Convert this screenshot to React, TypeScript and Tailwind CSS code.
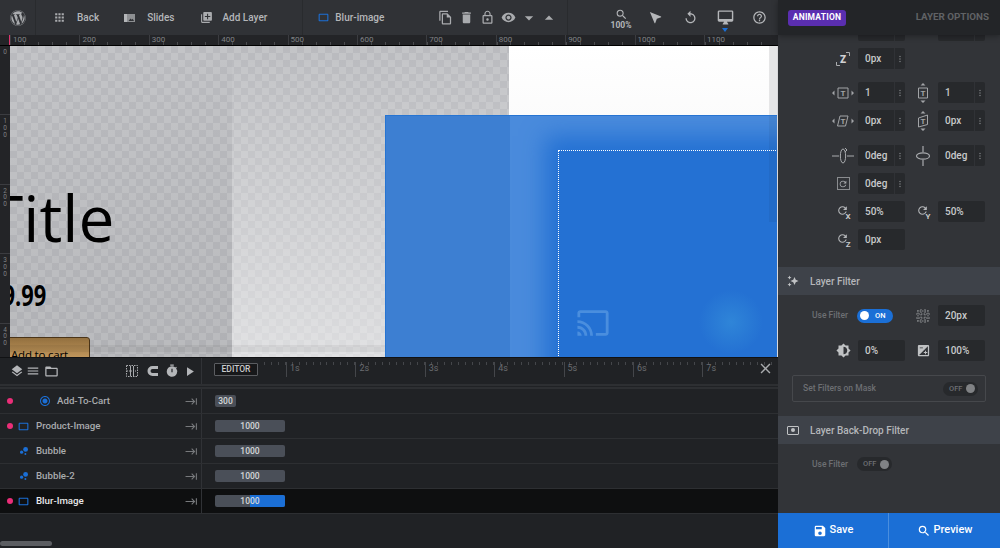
import type { ReactNode } from "react";
import { FaWordpress } from "react-icons/fa";
import {
  MdApps,
  MdArrowDropDown,
  MdArrowDropUp,
  MdAutoAwesome,
  MdBrightness6,
  MdBubbleChart,
  MdCast,
  MdClose,
  MdCropLandscape,
  MdDelete,
  MdExposure,
  MdFolderOpen,
  MdHelpOutline,
  MdKeyboardTab,
  MdLayers,
  MdLibraryAdd,
  MdLockOutline,
  MdMenu,
  MdMoreVert,
  MdNearMe,
  MdOutlineDesktopMac,
  MdOutlineFileCopy,
  MdPlayArrow,
  MdRadioButtonChecked,
  MdRefresh,
  MdReplay,
  MdSave,
  MdSearch,
  MdTimer,
  MdVisibility,
} from "react-icons/md";

const hTicks = ["100", "200", "300", "400", "500", "600", "700", "800", "900", "1000", "1100"];
const vTicks = ["1", "2", "3", "4"];
const seconds = ["1s", "2s", "3s", "4s", "5s", "6s", "7s"];

function TopItem({ icon, label, className }: { icon: ReactNode; label: string; className: string }) {
  return (
    <div className={`flex shrink-0 items-center whitespace-nowrap ${className}`}>
      {icon}
      <span className="text-[10px] font-medium text-[#b4b6b9]">{label}</span>
    </div>
  );
}

function SlidesIcon() {
  return (
    <svg width="11" height="8" viewBox="0 0 11 8" className="mr-[12px] shrink-0">
      <rect x="0" y="0" width="3" height="8" fill="#b4b6b9" />
      <rect x="3" y="0" width="8" height="8" fill="#8d8f92" />
      <path d="M4.5 7l2-2.5 1.2 1.2 1-.9L10 7z" fill="#303236" />
    </svg>
  );
}

function TopBar() {
  return (
    <div className="flex h-[35px] items-center bg-[#303236] text-[#a9abae]">
      <div className="flex h-full w-[36px] items-center justify-center border-r border-[#292b2e]">
        <FaWordpress className="text-[16px] text-[#a9abae]" />
      </div>
      <div className="flex h-full w-[267px] items-center border-r border-[#292b2e]">
        <TopItem className="ml-[17px]" label="Back" icon={<MdApps className="mr-[11px] shrink-0 text-[13px]" />} />
        <TopItem className="ml-[25px]" label="Slides" icon={<SlidesIcon />} />
        <TopItem
          className="ml-[26px]"
          label="Add Layer"
          icon={<MdLibraryAdd className="mr-[9px] shrink-0 text-[13px]" />}
        />
        <TopItem
          className="ml-[50px]"
          label="Blur-image"
          icon={<MdCropLandscape className="mr-[5px] shrink-0 text-[13px] text-[#1b6fd6]" />}
        />
      </div>
      <div className="flex h-full w-[265px] items-center justify-end gap-[6px] border-r border-[#292b2e] pr-[11px] text-[15px]">
        <MdOutlineFileCopy />
        <MdDelete />
        <MdLockOutline />
        <MdVisibility />
        <MdArrowDropDown className="-mx-[3px] text-[20px]" />
        <MdArrowDropUp className="-mx-[3px] text-[20px]" />
      </div>
      <div className="relative flex h-full w-[210px] items-center text-[#b4b6b9]">
        <div className="ml-[40px] flex w-[26px] flex-col items-center pt-[2px]">
          <MdSearch className="text-[13px]" />
          <span className="text-[8.5px] font-bold leading-[8px]">100%</span>
        </div>
        <MdNearMe className="ml-[14px] -scale-x-100 text-[15px]" />
        <MdReplay className="ml-[20px] text-[15px]" />
        <div className="relative ml-[19px]">
          <MdOutlineDesktopMac className="text-[17px]" />
          <div className="absolute left-[5px] top-[19px] h-0 w-0 border-x-[3px] border-t-[4px] border-x-transparent border-t-[#1b6fd6]" />
        </div>
        <MdHelpOutline className="ml-[18px] text-[15px]" />
      </div>
    </div>
  );
}

function Ruler() {
  return (
    <div className="flex h-[10px] bg-[#232427]">
      <div className="w-[10px] border-r border-[#e0356f]" />
      <div className="flex bg-[repeating-linear-gradient(90deg,#4a4b4e_0_1px,transparent_1px_13.9px)] bg-[length:100%_3px] bg-bottom bg-no-repeat">
        {hTicks.map((t) => (
          <div key={t} className="h-[10px] w-[69.4px] border-l border-[#3b3c40] pl-[2px] text-[8px] leading-[10px] text-[#7f8184]">
            {t}
          </div>
        ))}
      </div>
    </div>
  );
}

function VRuler() {
  return (
    <div className="absolute left-0 top-0 z-10 h-full w-[10px] bg-[#232427] text-center text-[6.5px] text-[#7f8184]">
      <div className="h-[68px] pt-[2px] leading-[8px]">0</div>
      {vTicks.map((t) => (
        <div key={t} className="h-[69.5px] border-t border-[#3b3c40] pt-[3px] leading-[6.8px]">
          {t}
          <br />0<br />0
        </div>
      ))}
    </div>
  );
}

function Canvas() {
  return (
    <div className="relative flex-1 overflow-hidden border-t border-black bg-[#d9d9db]">
      <VRuler />
      {/* transparent stage */}
      <div className="absolute left-[10px] top-0 h-full w-[499px] bg-[repeating-conic-gradient(#b9babe_0_25%,#c3c4c7_0_50%)] bg-[length:14px_14px]" />
      <div className="absolute left-[10px] top-0 h-full w-[222px] bg-gradient-to-b from-black/0 to-black/5" />
      <div className="absolute left-[232px] top-0 h-full w-[277px] bg-gradient-to-b from-white/0 via-white/25 to-white/50" />
      <div className="absolute left-[509px] top-0 h-full w-[268px] bg-gradient-to-b from-white to-[#eeeeef]" />
      <div className="absolute left-[769px] top-0 h-[176px] w-[8px] bg-[#e6e6e7]" />
      <div className="absolute left-[-12px] top-[137px] font-['Open_Sans',sans-serif] text-[64px] leading-[70px] text-black">
        Title
      </div>
      <div className="absolute left-[-10px] top-[229px] origin-left scale-x-[0.78] font-['Open_Sans',sans-serif] text-[28px] font-bold leading-[40px] text-black">
        $9.99
      </div>
      <div className="absolute left-0 top-[291px] h-[30px] w-[90px] rounded-tr-[3px] border border-[#4a3418] bg-gradient-to-b from-[#93703f] to-[#d5a86a] pl-[10px] pt-[9px] font-['Open_Sans',sans-serif] text-[11.5px] font-medium leading-[16px] tracking-[-0.2px] text-black">
        Add to cart
      </div>
      <div className="absolute left-[10px] top-[299px] h-[7px] w-[767px] bg-black/5" />
      {/* blurred image layer */}
      <div className="absolute bottom-0 left-[385px] top-[69px] w-[392px] overflow-hidden border-l border-t border-[#2674d2] bg-[#4a8bdc]">
        <div className="absolute left-0 top-0 h-full w-[124px] bg-[#3d7fd2]" />
        <div className="absolute left-[173px] top-[34px] h-[300px] w-[230px] bg-[#2471d3] shadow-[0_0_22px_14px_#2471d3]" />
        <div className="absolute left-[313px] top-[174px] h-[64px] w-[64px] bg-[radial-gradient(closest-side,#2f85d8,transparent)]" />
        <MdCast className="absolute left-[190px] top-[190px] text-[34px] text-[#4a8ede]" />
        <div className="absolute right-0 top-0 h-[106px] w-[8px] bg-black/5" />
        <div className="absolute left-[172px] top-[34px] h-[300px] w-[230px] border-l border-t border-dotted border-white" />
      </div>
    </div>
  );
}

function TimelineRow({
  name,
  icon,
  dot,
  indent,
  selected,
  barWidth = 70,
  value,
}: {
  name: string;
  icon: ReactNode;
  dot?: boolean;
  indent?: boolean;
  selected?: boolean;
  barWidth?: number;
  value: string;
}) {
  return (
    <div className={`flex h-[25px] border-b border-[#2d2f32] ${selected ? "bg-[#0e0f10]" : ""}`}>
      <div className="flex w-[202px] items-center border-r border-[#303236]">
        <div className="ml-[7px] w-[6px]">
          {dot && <div className="h-[6px] w-[6px] rounded-full bg-[#ea2e78]" />}
        </div>
        <div className={`flex items-center ${indent ? "ml-[25px]" : "ml-[4px]"} w-[13px] justify-center text-[#1b6fd6]`}>
          {icon}
        </div>
        <span className={`ml-[6px] text-[9.7px] font-medium ${selected ? "text-[#e8e9ea]" : "text-[#a9abae]"}`}>{name}</span>
        <MdKeyboardTab className="ml-auto mr-[3px] text-[13px] text-[#77797c]" />
      </div>
      <div className="flex items-center pl-[13px]">
        <div
          className="relative flex h-[12px] items-center justify-center overflow-hidden rounded-[2px] bg-[#4a4f58] text-[8.5px] font-medium text-[#d6d8da]"
          style={{ width: barWidth }}
        >
          {selected && <div className="absolute bottom-0 right-0 top-0 w-[35px] bg-[#1b6fd6]" />}
          <span className="relative">{value}</span>
        </div>
      </div>
    </div>
  );
}

function Timeline() {
  return (
    <div className="relative h-[191px] border-t border-[#111214] bg-[#202225]">
      <div className="flex h-[31px] border-b-[5px] border-double border-[#2d2f32]">
        <div className="flex w-[202px] items-center border-r border-[#303236] text-[#b4b6b9]">
          <MdLayers className="ml-[10px] text-[14px]" />
          <MdMenu className="ml-[2px] text-[14px]" />
          <MdFolderOpen className="ml-[4px] text-[15px]" />
          <svg width="12" height="12" viewBox="0 0 12 12" fill="none" stroke="#a9abae" className="ml-[67px]">
            <rect x=".5" y=".5" width="11" height="11" strokeDasharray="1.5 1" />
            <path d="M4.5 1v10M7.5 1v10" />
            <path d="M1 6h10" strokeDasharray="1 1" />
          </svg>
          {/* magnet */}
          <svg width="12" height="12" viewBox="0 0 12 12" className="ml-[9px]">
            <path d="M11 1H5.5a5 5 0 000 10H11V8H5.5a2 2 0 010-4H11z" fill="currentColor" />
          </svg>
          <MdTimer className="ml-[6px] text-[14px]" />
          <MdPlayArrow className="ml-[3px] text-[15px]" />
        </div>
        <div className="relative flex-1">
          <div className="absolute left-[12px] top-[5px] flex h-[13px] w-[44px] items-center justify-center rounded-[1px] border border-[#5b5d61] bg-[#17181a] text-[8.5px] font-medium text-[#c9cacc]">
            EDITOR
          </div>
          <div className="absolute left-[62px] top-[4px] flex bg-[repeating-linear-gradient(90deg,#44464a_0_1px,transparent_1px_6.94px)] bg-[length:100%_3px] bg-[0_100%] bg-no-repeat pl-[22px]">
            {seconds.map((s) => (
              <div key={s} className="h-[15px] w-[69.4px] border-l border-[#44464a] pl-[3px] text-[9px] leading-[12px] text-[#6a6c70]">
                {s}
              </div>
            ))}
          </div>
          <MdClose className="absolute right-[4px] top-[2px] text-[17px] text-[#a9abae]" />
        </div>
      </div>
      <TimelineRow
        name="Add-To-Cart"
        indent
        dot
        barWidth={21}
        value="300"
        icon={<MdRadioButtonChecked className="text-[12px]" />}
      />
      <TimelineRow name="Product-Image" dot value="1000" icon={<MdCropLandscape className="text-[13px]" />} />
      <TimelineRow name="Bubble" value="1000" icon={<MdBubbleChart className="text-[12px]" />} />
      <TimelineRow name="Bubble-2" value="1000" icon={<MdBubbleChart className="text-[12px]" />} />
      <TimelineRow name="Blur-Image" dot selected value="1000" icon={<MdCropLandscape className="text-[13px]" />} />
      <div className="absolute bottom-[2px] left-0 h-[5px] w-[52px] rounded-full bg-[#5c5e62]" />
    </div>
  );
}

function Field({ value, menu = true }: { value: string; menu?: boolean }) {
  return (
    <div className="flex h-[21px] w-[47px] rounded-[2px] bg-[#27292c] text-[10px] font-medium leading-[21px] text-[#c8c9cb]">
      <span className="flex-1 pl-[7px]">{value}</span>
      {menu && (
        <span className="flex w-[11px] items-center justify-center border-l border-[#303236] text-[#77797c]">
          <MdMoreVert className="text-[10px]" />
        </span>
      )}
    </div>
  );
}

function TBox({ skew, tall }: { skew?: boolean; tall?: boolean }) {
  return (
    <svg width="24" height="20" viewBox="0 0 24 20" fill="none" className="text-[#a2a4a7]">
      {tall ? (
        <>
          <path d="M12 0l-2.5 2.5h5zM12 20l-2.5-2.5h5z" fill="currentColor" />
          <path d={skew ? "M7.5 7l9-3v9.5l-9 2.5z" : "M7.5 5h9v10h-9z"} stroke="currentColor" />
        </>
      ) : (
        <>
          <path d="M1 10l2.5-2.5v5zM23 10l-2.5-2.5v5z" fill="currentColor" />
          <path d={skew ? "M6.5 15l2.5-10h8l-2.5 10z" : "M7 5h10v10h-10z"} stroke="currentColor" />
        </>
      )}
      <text x="12" y="13" textAnchor="middle" fontSize="8" fontWeight="700" fill="currentColor" fontFamily="Roboto">
        T
      </text>
    </svg>
  );
}

function ZIcon() {
  return (
    <svg width="14" height="14" viewBox="0 0 14 14" fill="none" className="text-[#a9abae]">
      <path d="M10 .5h3.5V4M.5 10v3.5H4" stroke="currentColor" />
      <text x="7" y="10.5" textAnchor="middle" fontSize="10" fontWeight="900" fill="#d0d1d3" fontFamily="Roboto">
        Z
      </text>
    </svg>
  );
}

function RotIcon({ axis }: { axis: string }) {
  return (
    <span className="relative flex h-[16px] w-[15px] items-start text-[#b4b6b9]">
      <MdRefresh className="text-[13px]" />
      <span className="absolute bottom-[-1px] right-0 text-[8px] font-bold leading-[8px] text-[#c8c9cb]">{axis}</span>
    </span>
  );
}

function BlurGridIcon() {
  return (
    <svg width="14" height="14" viewBox="0 0 14 14" stroke="currentColor" strokeDasharray="1.5 1">
      <path d="M2 1v12M5 0v14M9 0v14M12 1v12M1 2h12M0 5h14M0 9h14M1 12h12" />
    </svg>
  );
}

function Slot({ children, second }: { children?: ReactNode; second?: boolean }) {
  return (
    <div className={`flex h-[21px] items-center justify-center text-[#a9abae] ${second ? "ml-[6px] mr-[3px] w-[24px]" : "ml-[53px] mr-[3px] w-[24px]"}`}>
      {children}
    </div>
  );
}

function Row({ className = "", children }: { className?: string; children: ReactNode }) {
  return <div className={`flex shrink-0 ${className}`}>{children}</div>;
}

function Section({ icon, title, className }: { icon: ReactNode; title: string; className: string }) {
  return (
    <div className={`flex h-[28px] shrink-0 items-center bg-[#3e4249] pl-[9px] text-[10px] font-medium text-[#b4b6b9] ${className}`}>
      <span className="flex w-[12px] justify-center text-[#c0c2c4]">{icon}</span>
      <span className="ml-[11px]">{title}</span>
    </div>
  );
}

function Toggle({ plain }: { plain?: boolean }) {
  return (
    <div className={`relative flex h-[14px] w-[35px] items-center rounded-full bg-[#27292c] pl-[6px] text-[7.5px] font-medium text-[#6d6f73] ${plain ? "" : "ml-auto"}`}>
      OFF
      <span className="absolute right-[3px] top-[2.5px] h-[9px] w-[9px] rounded-full bg-[#808285]" />
    </div>
  );
}

function RightPanel() {
  return (
    <div className="flex w-[222px] flex-col bg-[#323438]">
      <div className="relative z-10 flex h-[35px] shrink-0 items-center bg-[#232528] shadow-[0_1px_6px_rgba(0,0,0,0.35)]">
        <div className="ml-[10px] flex h-[16px] w-[58px] items-center justify-center rounded-[3px] bg-[#5a2eb0] text-[8.5px] font-bold tracking-[0.2px] text-white">
          ANIMATION
        </div>
        <span className="ml-auto mr-[11px] text-[9.8px] font-bold text-[#606265]">LAYER OPTIONS</span>
      </div>
      <div className="flex flex-1 flex-col overflow-hidden">
        <Row className="-mt-[15px]">
          <Slot />
          <Field value="" />
          <Slot second />
          <Field value="" />
        </Row>
        <Row className="mt-[7px]">
          <Slot>
            <ZIcon />
          </Slot>
          <Field value="0px" />
        </Row>
        <Row className="mt-[13px]">
          <Slot>
            <TBox />
          </Slot>
          <Field value="1" />
          <Slot second>
            <TBox tall />
          </Slot>
          <Field value="1" />
        </Row>
        <Row className="mt-[7px]">
          <Slot>
            <TBox skew />
          </Slot>
          <Field value="0px" />
          <Slot second>
            <TBox skew tall />
          </Slot>
          <Field value="0px" />
        </Row>
        <Row className="mt-[14px]">
          <Slot>
            <svg width="22" height="18" viewBox="0 0 22 18" fill="none" stroke="currentColor">
              <path d="M0 9h7M15 9h7M11 2c-3.5 0-3.5 14 0 14 3.5 0 3.5-14 0-14z" />
              <path d="M13 1l2 2-2 2" />
            </svg>
          </Slot>
          <Field value="0deg" />
          <Slot second>
            <svg width="16" height="20" viewBox="0 0 16 20" fill="none" stroke="currentColor" strokeWidth="1.2">
              <path d="M8 0v6M8 14v6" />
              <ellipse cx="8" cy="10" rx="6.5" ry="3.2" />
            </svg>
          </Slot>
          <Field value="0deg" />
        </Row>
        <Row className="mt-[7px]">
          <Slot>
            <span className="flex h-[13px] w-[13px] items-center justify-center border border-[#8a8c8f]">
              <MdRefresh className="text-[10px]" />
            </span>
          </Slot>
          <Field value="0deg" />
        </Row>
        <Row className="mt-[7px]">
          <Slot>
            <RotIcon axis="X" />
          </Slot>
          <Field value="50%" menu={false} />
          <Slot second>
            <RotIcon axis="Y" />
          </Slot>
          <Field value="50%" menu={false} />
        </Row>
        <Row className="mt-[7px]">
          <Slot>
            <RotIcon axis="Z" />
          </Slot>
          <Field value="0px" menu={false} />
        </Row>
        <Section className="mt-[17px]" title="Layer Filter" icon={<MdAutoAwesome className="-scale-x-100 text-[12px]" />} />
        <Row className="mt-[10px] items-center">
          <span className="ml-[34px] w-[45px] text-[8.5px] font-medium text-[#6d6f73]">Use Filter</span>
          <div className="relative flex h-[14px] w-[36px] items-center rounded-full bg-[#1b6fd6] pl-[18px] text-[7.5px] font-medium text-white">
            ON
            <span className="absolute left-[3px] top-[2.5px] h-[9px] w-[9px] rounded-full bg-white" />
          </div>
          <div className="ml-[18px] mr-[3px] flex w-[24px] justify-center text-[#8a8c8f]">
            <BlurGridIcon />
          </div>
          <Field value="20px" menu={false} />
        </Row>
        <Row className="mt-[14px]">
          <Slot>
            <MdBrightness6 className="text-[15px] text-[#c0c2c4]" />
          </Slot>
          <Field value="0%" menu={false} />
          <Slot second>
            <MdExposure className="text-[15px] text-[#c0c2c4]" />
          </Slot>
          <Field value="100%" menu={false} />
        </Row>
        <div className="ml-[14px] mt-[14px] flex h-[27px] w-[194px] shrink-0 items-center rounded-[2px] border border-[#46484c] pl-[10px] pr-[7px]">
          <span className="text-[8.5px] font-medium text-[#6d6f73]">Set Filters on Mask</span>
          <Toggle />
        </div>
        <Section
          className="mt-[14px]"
          title="Layer Back-Drop Filter"
          icon={
            <span className="flex h-[9px] w-[12px] items-center justify-center rounded-[1px] border border-[#c0c2c4]">
              <span className="h-[4px] w-[4px] rounded-full bg-[#c0c2c4]" />
            </span>
          }
        />
        <Row className="mt-[13px] items-center">
          <span className="ml-[34px] w-[45px] text-[8.5px] font-medium text-[#6d6f73]">Use Filter</span>
          <Toggle plain />
        </Row>
      </div>
      <div className="flex h-[35px] shrink-0 bg-[#1b6fd6] text-[11px] font-medium text-white">
        <div className="flex w-[111px] items-center justify-center gap-[3px] border-r border-[#4a8ede]">
          <MdSave className="text-[14px]" />
          Save
        </div>
        <div className="flex flex-1 items-center justify-center gap-[3px]">
          <MdSearch className="text-[14px]" />
          Preview
        </div>
      </div>
    </div>
  );
}

export default function App() {
  return (
    <div className="flex h-[548px] w-[1000px] overflow-hidden font-['Roboto',sans-serif]">
      <div className="flex w-[778px] flex-col">
        <TopBar />
        <Ruler />
        <Canvas />
        <Timeline />
      </div>
      <RightPanel />
    </div>
  );
}
